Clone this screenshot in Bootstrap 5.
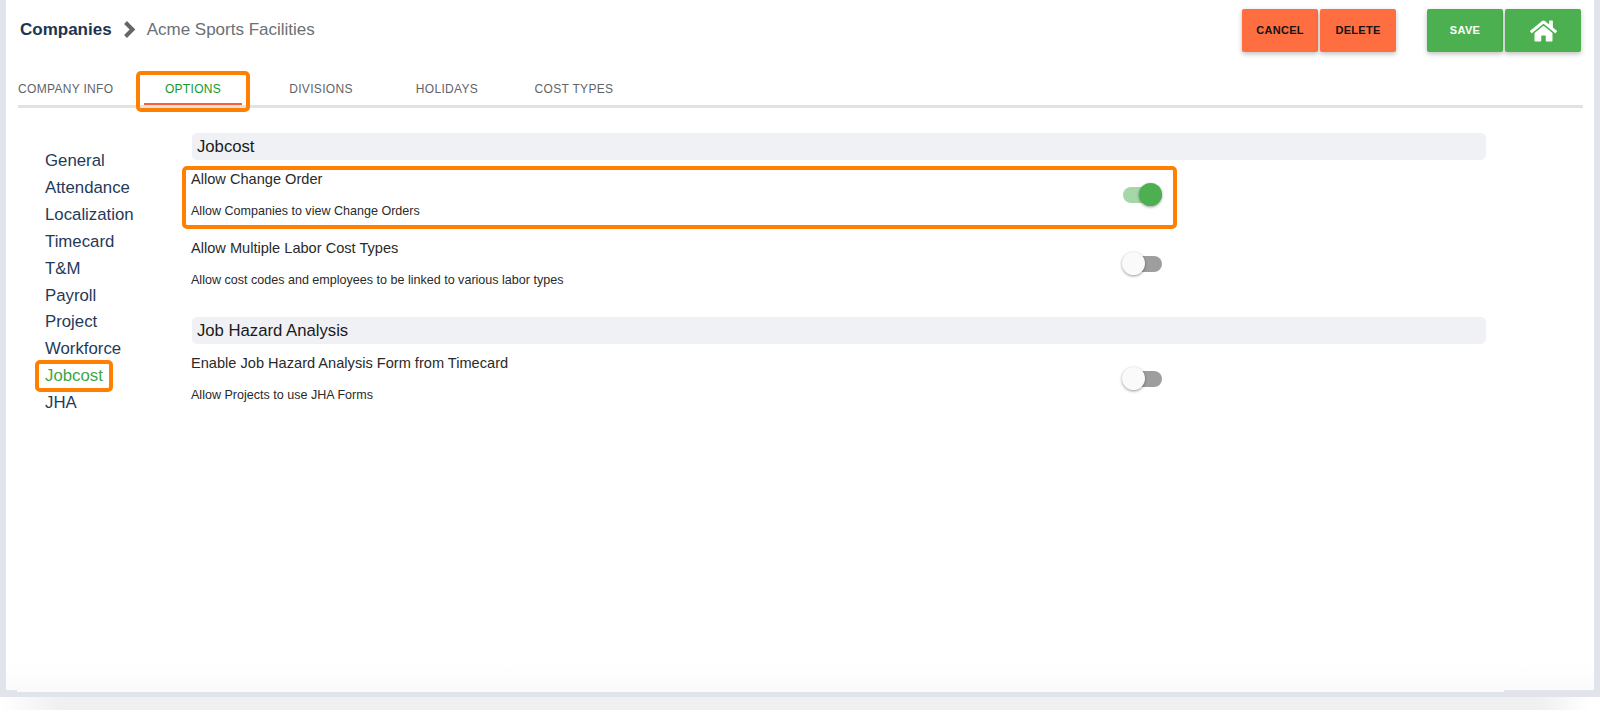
<!DOCTYPE html>
<html lang="en">
<head>
<meta charset="utf-8">
<title>Companies - Acme Sports Facilities</title>
<link href="https://cdn.jsdelivr.net/npm/bootstrap@5.3.0/dist/css/bootstrap.min.css" rel="stylesheet">
<style>
html, body { height: 710px; overflow: hidden; }
body { font-family: "Liberation Sans", Arial, sans-serif; background: linear-gradient(90deg, #fff 0, #f0f0f0 60px, #f0f0f0 1540px, #fff 1590px); color: #222; }
.frame { height: 697px; background: #e2e4ec; padding: 0 6px 5px 6px; }
.sheet {
  height: 100%;
  background:
    linear-gradient(#e2e4ec, #e2e4ec) left bottom / 11px 2px no-repeat,
    linear-gradient(#e2e4ec, #e2e4ec) right bottom / 90px 2px no-repeat,
    linear-gradient(180deg, #fff 0, #fff 96%, #fafafa 100%);
  padding: 9px 13px 0 12px;
}
.head-row { height: 43px; }
.crumb-main { font-size: 17px; font-weight: 700; color: #1c3553; padding-left: 2px; }
.crumb-sub { font-size: 17px; color: #6b7075; }
.crumb-chev { width: 14px; height: 17px; margin: 0 11px 0 10px; }
.crumb-wrap { margin-top: -2px; }
.act { width: 76px; height: 43px; border: 0; border-radius: 2px; padding: 0; font-size: 11px; font-weight: 700; letter-spacing: .3px; box-shadow: 0 2px 5px rgba(0,0,0,.25); }
.act + .act { margin-left: 2px; }
.act-warn, .act-warn:hover { background: #ff6e40; color: #141414; }
.act-ok, .act-ok:hover { background: #4caf50; color: #fff; }
.act-gap { width: 31px; }
.tabs { margin-top: 20px; height: 36px; margin-right: -2px; border-bottom: 3px solid #e2e2e2; flex-wrap: nowrap; }
.tabs .nav-link { padding: 8px 0 0; height: 33px; font-size: 12px; letter-spacing: .32px; color: #5f6468; text-align: center; position: relative; white-space: nowrap; }
.tabs .t1 { width: 98px; text-align: left; margin-right: 28px; }
.tabs .t2 { width: 98px; color: #129a2a; border-bottom: 2px solid #f4623a; }
.tabs .t3 { width: 136px; margin-left: 11px; }
.tabs .t4 { width: 116px; }
.tabs .t5 { width: 110px; margin-left: 14px; }
.mark-box { position: absolute; border: 4px solid #ff8000; border-radius: 5px; pointer-events: none; }
.mark-tab { left: -8px; right: -8px; top: -1px; bottom: -9px; }
.mark-side { left: -10px; right: -10px; top: -3px; bottom: -2px; }
.mark-row { left: -9px; right: -15px; top: -2px; bottom: -7px; }
.body-row { margin-top: 25px; }
.side { width: 174px; padding: 15px 0 0 27px; flex: none; }
.side .nav-link { padding: 0; font-size: 16.8px; line-height: 26.9px; color: #1f3a5a; }
.side .on { color: #3fa648; position: relative; width: max-content; }
.main-col { width: 1294px; flex: none; }
.sec-head { height: 27px; margin-bottom: 8px; padding-left: 5px; background: #eff1f5; border-radius: 5px; font-size: 16.7px; line-height: 27px; color: #1a1a1a; }
.opt { height: 54px; width: 971px; margin: 0 0 15px -1px; position: relative; }
.opt-last { margin-bottom: 26px; }
.opt-title { font-size: 14.6px; line-height: 22px; color: #2a2a2a; }
.opt-desc { font-size: 12.55px; line-height: 18px; margin-top: 12px; color: #2a2a2a; }
.tgl { width: 40px; height: 23px; margin-bottom: 1px; position: relative; }
.tgl-track { display: block; height: 16px; flex: 1; margin-left: 1px; border-radius: 8px; background: #9e9e9e; }
.tgl-knob { display: block; width: 23px; height: 23px; border-radius: 50%; background: #fafafa; box-shadow: 0 1px 3px rgba(0,0,0,.4); flex: none; }
.tgl-off .tgl-knob { order: -1; margin-right: -23px; position: relative; }
.tgl-on .tgl-track { background: #a6d7a8; }
.tgl-on .tgl-knob { background: #4caf50; margin-left: -23px; }
</style>
</head>
<body>
<div class="frame">
  <div class="sheet">
    <div class="head-row d-flex align-items-center justify-content-between">
      <div class="crumb-wrap d-flex align-items-center">
        <span class="crumb-main">Companies</span>
        <svg class="crumb-chev" viewBox="0 0 14 17"><path d="M3.500 1.500 10.500 8.500l-7 7" fill="none" stroke="#666" stroke-width="4"/></svg>
        <span class="crumb-sub">Acme Sports Facilities</span>
      </div>
      <div class="d-flex align-items-center">
        <button type="button" class="btn act act-warn">CANCEL</button>
        <button type="button" class="btn act act-warn">DELETE</button>
        <span class="act-gap"></span>
        <button type="button" class="btn act act-ok">SAVE</button>
        <button type="button" class="btn act act-ok" aria-label="Home">
          <svg width="27" height="24" viewBox="0 0 576 512" fill="#fff"><path d="M280.37 148.26L96 300.11V464a16 16 0 0 0 16 16l112.06-.29a16 16 0 0 0 15.92-16V368a16 16 0 0 1 16-16h64a16 16 0 0 1 16 16v95.64a16 16 0 0 0 16 16.05L464 480a16 16 0 0 0 16-16V300L295.67 148.26a12.19 12.19 0 0 0-15.3 0zM571.6 251.47L488 182.56V44.05a12 12 0 0 0-12-12h-56a12 12 0 0 0-12 12v72.61L318.47 43a48 48 0 0 0-61 0L4.34 251.47a12 12 0 0 0-1.6 16.9l25.5 31A12 12 0 0 0 45.15 301l235.22-193.74a12.19 12.19 0 0 1 15.3 0L530.9 301a12 12 0 0 0 16.9-1.6l25.5-31a12 12 0 0 0-1.7-16.93z"/></svg>
        </button>
      </div>
    </div>

    <nav class="nav tabs">
      <a class="nav-link t1" href="#">COMPANY INFO</a>
      <a class="nav-link t2" href="#">OPTIONS<span class="mark-box mark-tab"></span></a>
      <a class="nav-link t3" href="#">DIVISIONS</a>
      <a class="nav-link t4" href="#">HOLIDAYS</a>
      <a class="nav-link t5" href="#">COST TYPES</a>
    </nav>

    <div class="body-row d-flex">
      <nav class="nav flex-column side">
        <a class="nav-link" href="#">General</a>
        <a class="nav-link" href="#">Attendance</a>
        <a class="nav-link" href="#">Localization</a>
        <a class="nav-link" href="#">Timecard</a>
        <a class="nav-link" href="#">T&amp;M</a>
        <a class="nav-link" href="#">Payroll</a>
        <a class="nav-link" href="#">Project</a>
        <a class="nav-link" href="#">Workforce</a>
        <a class="nav-link on" href="#">Jobcost<span class="mark-box mark-side"></span></a>
        <a class="nav-link" href="#">JHA</a>
      </nav>
      <div class="main-col">
        <div class="sec-head">Jobcost</div>
        <div class="opt d-flex justify-content-between align-items-center">
          <div class="align-self-start">
            <div class="opt-title">Allow Change Order</div>
            <div class="opt-desc">Allow Companies to view Change Orders</div>
          </div>
          <div class="tgl tgl-on d-flex align-items-center"><span class="tgl-track"></span><span class="tgl-knob"></span></div>
          <span class="mark-box mark-row"></span>
        </div>
        <div class="opt opt-last d-flex justify-content-between align-items-center">
          <div class="align-self-start">
            <div class="opt-title">Allow Multiple Labor Cost Types</div>
            <div class="opt-desc">Allow cost codes and employees to be linked to various labor types</div>
          </div>
          <div class="tgl tgl-off d-flex align-items-center"><span class="tgl-track"></span><span class="tgl-knob"></span></div>
        </div>
        <div class="sec-head">Job Hazard Analysis</div>
        <div class="opt d-flex justify-content-between align-items-center">
          <div class="align-self-start">
            <div class="opt-title">Enable Job Hazard Analysis Form from Timecard</div>
            <div class="opt-desc">Allow Projects to use JHA Forms</div>
          </div>
          <div class="tgl tgl-off d-flex align-items-center"><span class="tgl-track"></span><span class="tgl-knob"></span></div>
        </div>
      </div>
    </div>
  </div>
</div>
<script src="https://cdn.jsdelivr.net/npm/bootstrap@5.3.0/dist/js/bootstrap.bundle.min.js"></script>
</body>
</html>
